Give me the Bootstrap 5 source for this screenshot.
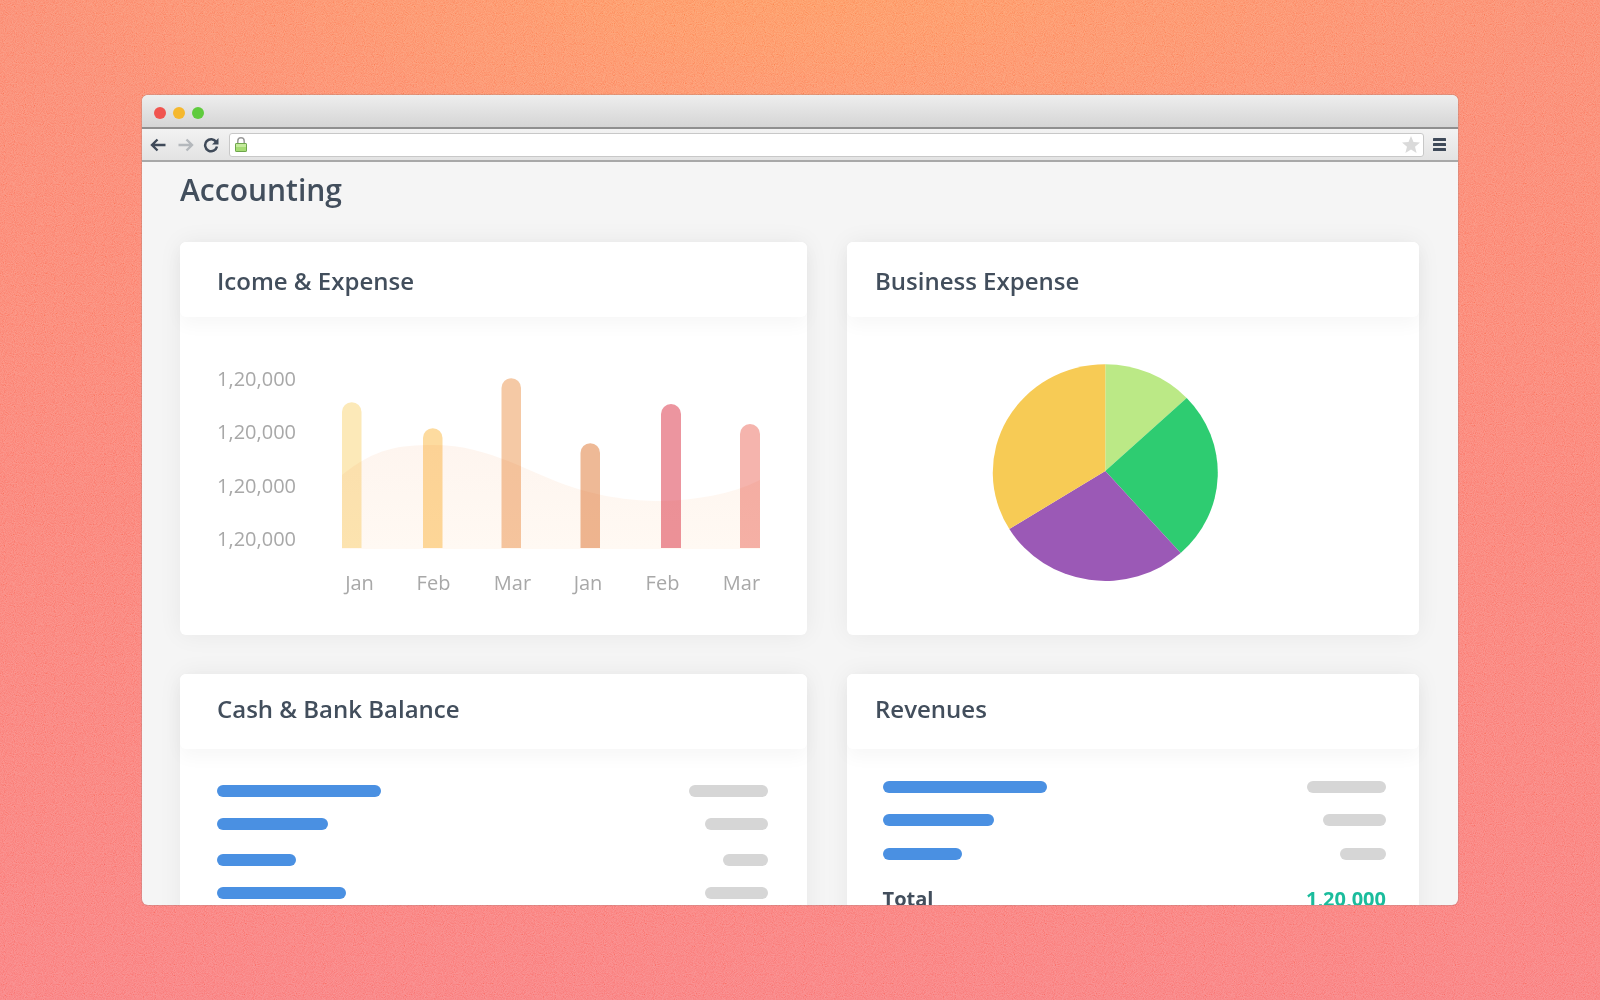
<!DOCTYPE html>
<html lang="en">
<head>
<meta charset="utf-8">
<title>Accounting</title>
<link href="https://cdn.jsdelivr.net/npm/bootstrap@5.3.0/dist/css/bootstrap.min.css" rel="stylesheet">
<style>
html,body{height:100%}
body{margin:0;padding-top:95px;overflow:hidden;font-family:"Open Sans","Noto Sans",sans-serif;color:#424e5c;
background-color:#f97c7e;
background-image:url("data:image/svg+xml,%3Csvg xmlns='http://www.w3.org/2000/svg' width='400' height='400'%3E%3Cfilter id='n' x='0' y='0' width='100%25' height='100%25'%3E%3CfeTurbulence type='fractalNoise' baseFrequency='1.1' numOctaves='1' stitchTiles='stitch'/%3E%3CfeColorMatrix values='0 0 0 0 1 1.6 0 0 0 -.25 1.6 0 0 0 -.33 0 0 0 0 .2'/%3E%3C/filter%3E%3Crect width='400' height='400' filter='url(%23n)'/%3E%3C/svg%3E"),radial-gradient(ellipse 800px 300px at 50% -40px,rgba(255,158,90,.95) 0,rgba(255,152,98,.7) 45%,rgba(255,150,105,0) 100%),linear-gradient(#fa8a6e 0,#fb8571 25%,#fa7f77 55%,#f97c7f 100%);}
.app-window{width:1316px;height:810px;margin:0 auto;border-radius:6px;overflow:hidden;background:#f5f5f5;box-shadow:0 0 0 1px rgba(120,120,120,.2)}
.title-strip{height:34px;padding:3px 0 0 12px;background:linear-gradient(#eeeeee,#d5d5d5);border-bottom:2px solid #8f8f8f;gap:7px}
.dot-btn{width:12px;height:12px;border-radius:50%}
.dot-red{background:#f0544f}.dot-amber{background:#f5b82e}.dot-green{background:#5fcb3d}
.tool-strip{height:33px;padding-left:8px;padding-right:12px;background:linear-gradient(#f2f2f2,#e3e3e3);border-bottom:2px solid #a8a8a8}
.tool-strip svg{flex:none;display:block}
.fwd-icon{margin-left:12px}.reload-icon{margin-left:9px}
.url-field{height:24px;margin-left:10px;margin-right:9px;padding:0 3px 0 5px;background:#fff;border:1px solid #c8c8c8;border-radius:3px}
.app-content{padding:0 38px}
.page-title{font-size:30px;font-weight:600;line-height:40px;margin:8px 0 32px;color:#424e5c}
.panel-grid{display:grid;grid-template-columns:627px 572px;column-gap:40px;row-gap:39px}
.panel-card{height:393px;border:0;border-radius:6px;background:#fff;box-shadow:0 0 24px rgba(0,0,0,.06)}
.panel-head{height:75px;padding:0 37px;background:#fff;border:0;border-radius:6px;box-shadow:0 8px 18px rgba(0,0,0,.035);font-size:24px;font-weight:600;color:#424e5c}
.panel-head-alt{padding-left:28px}
.head-low{padding-top:2px}.head-high{padding-bottom:6px}
.panel-chart svg{display:block}
.axis-text{font-family:"Open Sans",sans-serif;font-size:20px;font-weight:400;fill:#a8a8a8}
.area-shape{mix-blend-mode:multiply}
.list-left{padding:36px 39px 0 37px}
.list-right{padding:32px 33px 0 35.6px}
.bar-line{display:flex;justify-content:space-between;margin-bottom:21px}
.bar-gap{margin-bottom:24px}
.bar-gap-r{margin-bottom:22px}
.bar-blue,.bar-gray{height:12px;border-radius:6px}
.bar-blue{background:#4a90e2}.bar-gray{background:#d6d6d6}
.total-line{font-size:20px;font-weight:700;line-height:27px;margin-top:25px;display:flex;justify-content:space-between;color:#424e5c}
.total-val{color:#1abc9c}
</style>
</head>
<body>
<div class="app-window d-flex flex-column">
  <div class="title-strip d-flex align-items-center flex-shrink-0">
    <span class="dot-btn dot-red"></span><span class="dot-btn dot-amber"></span><span class="dot-btn dot-green"></span>
  </div>
  <div class="tool-strip d-flex align-items-center flex-shrink-0">
    <svg width="16" height="16" viewBox="0 0 16 16" fill="none" stroke="#3f4a59" stroke-width="2.4"><path d="M15.5 8H2M7.5 2.5 2 8l5.5 5.5"/></svg>
    <svg class="fwd-icon" width="16" height="16" viewBox="0 0 16 16" fill="none" stroke="#b4b8bc" stroke-width="2.4"><path d="M.5 8H14M8.5 2.5 14 8l-5.5 5.5"/></svg>
    <svg class="reload-icon" width="16" height="16" viewBox="0 0 16 16" fill="none"><path d="M13.200 5A6 6 0 1 0 14 9.500" stroke="#3f4a59" stroke-width="2.500"/><path d="M15.500 1v6.500H9z" fill="#3f4a59"/></svg>
    <div class="url-field flex-grow-1 d-flex align-items-center justify-content-between">
      <svg width="12" height="15" viewBox="0 0 12 15"><path d="M2.800 8V4a3.200 3.200 0 0 1 6.400 0V8" fill="none" stroke="#9a9a9a" stroke-width="1.500"/><rect x=".5" y="6.500" width="11" height="8" rx=".6" fill="#a5dc73" stroke="#6da54b"/><rect x="1" y="7" width="10" height="3" fill="#c4ea9c"/></svg>
      <svg width="18" height="17" viewBox="0 0 18 17"><path fill="#dadada" d="M9 0l2.500 6 6.500.5-5 4.200 1.600 6.300L9 13.600 3.400 17 5 10.700 0 6.500 6.500 6z"/></svg>
    </div>
    <svg width="13" height="13" viewBox="0 0 13 13" fill="#3f4a59"><rect width="13" height="3" rx=".6"/><rect y="5" width="13" height="3" rx=".6"/><rect y="10" width="13" height="3" rx=".6"/></svg>
  </div>
  <div class="app-content flex-grow-1">
    <h1 class="page-title">Accounting</h1>
    <div class="panel-grid">
      <div class="card panel-card">
        <div class="panel-head head-low d-flex align-items-center">Icome &amp; Expense</div>
        <div class="panel-chart">
          <svg width="627" height="318" viewBox="180 317 627 318">
            <defs><linearGradient id="areaFill" x1="0" y1="0" x2="0" y2="1"><stop offset="0" stop-color="#fef5ef"/><stop offset="1" stop-color="#fff9f3"/></linearGradient></defs>
            <g text-anchor="end" class="axis-text"><text x="296" y="386">1,20,000</text><text x="296" y="439">1,20,000</text><text x="296" y="493">1,20,000</text><text x="296" y="546">1,20,000</text></g>
            <path fill="#fce9b8" d="M342 548V412a9.750 9.750 0 0 1 19.500 0V548z"/>
            <path fill="#fddb9f" d="M423 548V438a9.750 9.750 0 0 1 19.500 0V548z"/>
            <path fill="#f5c9a5" d="M501.500 548V388a9.750 9.750 0 0 1 19.500 0V548z"/>
            <path fill="#eeb996" d="M580.500 548V453a9.750 9.750 0 0 1 19.500 0V548z"/>
            <path fill="#ec959f" d="M661 548V414a10 10 0 0 1 20 0V548z"/>
            <path fill="#f5b4ad" d="M740 548V434a10 10 0 0 1 20 0V548z"/>
            <path class="area-shape" fill="url(#areaFill)" d="M342 475C375 448 400 445 433 445C490 445 525 472 575 488C610 499 640 501 662 501C695 500 730 495 760 480V549H342z"/>
            <g text-anchor="middle" class="axis-text"><text x="359.500" y="590">Jan</text><text x="433.500" y="590">Feb</text><text x="512.500" y="590">Mar</text><text x="588" y="590">Jan</text><text x="662.500" y="590">Feb</text><text x="741.500" y="590">Mar</text></g>
          </svg>
        </div>
      </div>
      <div class="card panel-card">
        <div class="panel-head panel-head-alt head-low d-flex align-items-center">Business Expense</div>
        <div class="panel-chart">
          <svg width="572" height="318" viewBox="847 317 572 318">
            <path fill="#bbe986" d="M1105.300 471V364.200A112.500 108.300 0 0 1 1186.700 398L1105.300 471z"/>
            <path fill="#2ecc71" d="M1105.300 471L1186.700 398A112.500 108.300 0 0 1 1180.700 553.100z"/>
            <path fill="#9b59b6" d="M1105.300 471L1180.700 553.100A112.500 108.300 0 0 1 1009.300 529z"/>
            <path fill="#f7cb55" d="M1105.300 471L1009.300 529A112.500 108.300 0 0 1 1105.300 364.200z"/>
          </svg>
        </div>
      </div>
      <div class="card panel-card">
        <div class="panel-head head-high d-flex align-items-center">Cash &amp; Bank Balance</div>
        <div class="list-left">
          <div class="bar-line"><div class="bar-blue" style="width:164px"></div><div class="bar-gray" style="width:79px"></div></div>
          <div class="bar-line bar-gap"><div class="bar-blue" style="width:111px"></div><div class="bar-gray" style="width:63px"></div></div>
          <div class="bar-line"><div class="bar-blue" style="width:79px"></div><div class="bar-gray" style="width:45px"></div></div>
          <div class="bar-line"><div class="bar-blue" style="width:129px"></div><div class="bar-gray" style="width:63px"></div></div>
        </div>
      </div>
      <div class="card panel-card">
        <div class="panel-head panel-head-alt head-high d-flex align-items-center">Revenues</div>
        <div class="list-right">
          <div class="bar-line"><div class="bar-blue" style="width:164px"></div><div class="bar-gray" style="width:79px"></div></div>
          <div class="bar-line bar-gap-r"><div class="bar-blue" style="width:111px"></div><div class="bar-gray" style="width:63px"></div></div>
          <div class="bar-line"><div class="bar-blue" style="width:79px"></div><div class="bar-gray" style="width:46px"></div></div>
          <div class="total-line"><span>Total</span><span class="total-val">1,20,000</span></div>
        </div>
      </div>
    </div>
  </div>
</div>
<script src="https://cdn.jsdelivr.net/npm/bootstrap@5.3.0/dist/js/bootstrap.bundle.min.js"></script>
</body>
</html>
